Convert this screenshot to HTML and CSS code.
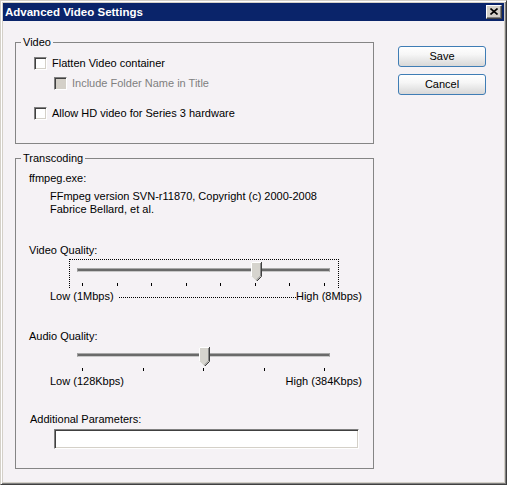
FILE: index.html
```html
<!DOCTYPE html>
<html>
<head>
<meta charset="utf-8">
<link rel="stylesheet" href="styles.css">
</head>
<body>
<div class="window">
  <div class="titlebar">
    <span class="title">Advanced Video Settings</span>
    <span class="close"><svg width="8" height="7" viewBox="0 0 8 7"><path d="M0.5 0.5 L7.5 6.5 M7.5 0.5 L0.5 6.5" stroke="#000" stroke-width="1.6" fill="none"/></svg></span>
  </div>
  <div class="client">
    <div class="main">
      <div class="group group-video">
        <div class="group-title">Video</div>
        <div class="check check-first"><span class="box"></span><span class="check-text">Flatten Video container</span></div>
        <div class="check check-sub disabled"><span class="box"></span><span class="check-text">Include Folder Name in Title</span></div>
        <div class="check check-third"><span class="box"></span><span class="check-text">Allow HD video for Series 3 hardware</span></div>
      </div>
      <div class="group group-trans">
        <div class="group-title">Transcoding</div>
        <div class="text exe">ffmpeg.exe:</div>
        <div class="text version">FFmpeg version SVN-r11870, Copyright (c) 2000-2008<br>Fabrice Bellard, et al.</div>
        <div class="text vq">Video Quality:</div>
        <div class="slider focused">
          <div class="track"></div>
          <div class="ticks"><i></i><i></i><i></i><i></i><i></i><i></i><i></i><i></i></div>
          <svg class="thumb" style="left:181px" width="11" height="19" viewBox="0 0 11 19">
            <polygon points="0,0 11,0 11,14 5.5,19.5 0,14" fill="#d6d4ce"/>
            <polyline points="0.5,14.5 0.5,0.5 10,0.5" stroke="#ffffff" fill="none"/>
            <polyline points="0.5,14.5 5,19" stroke="#f0f0f0" fill="none"/>
            <polyline points="10.5,0 10.5,14.5 5.5,19.5" stroke="#404040" fill="none"/>
            <polyline points="9.5,1 9.5,14 5.2,18.3" stroke="#8a8a8a" fill="none"/>
          </svg>
        </div>
        <div class="range"><span class="range-low">Low (1Mbps)</span><span class="dots"></span><span>High (8Mbps)</span></div>
        <div class="text aq">Audio Quality:</div>
        <div class="slider">
          <div class="track"></div>
          <div class="ticks"><i></i><i></i><i></i><i></i><i></i></div>
          <svg class="thumb" style="left:129px" width="11" height="19" viewBox="0 0 11 19">
            <polygon points="0,0 11,0 11,14 5.5,19.5 0,14" fill="#d6d4ce"/>
            <polyline points="0.5,14.5 0.5,0.5 10,0.5" stroke="#ffffff" fill="none"/>
            <polyline points="0.5,14.5 5,19" stroke="#f0f0f0" fill="none"/>
            <polyline points="10.5,0 10.5,14.5 5.5,19.5" stroke="#404040" fill="none"/>
            <polyline points="9.5,1 9.5,14 5.2,18.3" stroke="#8a8a8a" fill="none"/>
          </svg>
        </div>
        <div class="range"><span class="range-low">Low (128Kbps)</span><span class="spacer"></span><span>High (384Kbps)</span></div>
        <div class="text ap">Additional Parameters:</div>
        <div class="textbox"></div>
      </div>
    </div>
    <div class="buttons">
      <button class="btn">Save</button>
      <button class="btn">Cancel</button>
    </div>
  </div>
</div>
</body>
</html>
```
FILE: styles.css
```css
html, body {
  margin: 0;
  padding: 0;
}
body {
  font-family: "Liberation Sans", Arial, sans-serif;
  font-size: 11px;
  color: #000;
  background: #d4d0c8;
}
.window {
  width: 507px;
  height: 485px;
  box-sizing: border-box;
  border: 1px solid;
  border-color: #d4d0c8 #404040 #404040 #d4d0c8;
  box-shadow: inset 1px 1px 0 #ffffff, inset -1px -1px 0 #808080;
  padding: 2px;
  background: #d4d0c8;
  display: flex;
  flex-direction: column;
}
.titlebar {
  height: 18px;
  flex: none;
  background: #0a246a;
  display: flex;
  align-items: flex-start;
  justify-content: space-between;
}
.title {
  color: #fff;
  font-weight: bold;
  font-size: 11.5px;
  line-height: 18px;
  padding-left: 2px;
}
.close {
  width: 16px;
  height: 14px;
  box-sizing: border-box;
  margin: 2px 2px 0 0;
  background: #d4d0c8;
  border: 1px solid;
  border-color: #ffffff #404040 #404040 #ffffff;
  box-shadow: inset -1px -1px 0 #808080;
  display: flex;
  align-items: center;
  justify-content: center;
}
.close svg {
  display: block;
  margin: 0 1px 1px 0;
}
.client {
  flex: 1;
  background: #f5f2f5;
  display: flex;
  padding: 21px 0 0 12px;
}
.main {
  width: 359px;
  display: flex;
  flex-direction: column;
}
.group {
  box-sizing: border-box;
  border: 1px solid #858585;
  display: flex;
  flex-direction: column;
  align-items: flex-start;
}
.group-video {
  height: 102px;
}
.group-trans {
  height: 311px;
  margin-top: 14px;
}
.group-title {
  margin: -7px 0 0 5px;
  padding: 0 2px;
  line-height: 13px;
  height: 13px;
  background: #f5f2f5;
}
.check {
  display: flex;
  align-items: center;
  height: 13px;
  line-height: 13px;
  margin-left: 18px;
}
.check-first { margin-top: 8px; }
.check-sub { margin-top: 7px; margin-left: 38px; }
.check-third { margin-top: 17px; }
.box {
  width: 13px;
  height: 13px;
  box-sizing: border-box;
  border: 1px solid;
  border-color: #808080 #ffffff #ffffff #808080;
  box-shadow: inset 1px 1px 0 #404040, inset -1px -1px 0 #d4d0c8;
  background: #ffffff;
  flex: none;
}
.check-text {
  margin-left: 5px;
}
.disabled .box {
  background: #d4d0c8;
}
.disabled .check-text {
  color: #808080;
}
.text {
  line-height: 13px;
  margin-left: 13px;
}
.exe { margin-top: 7px; }
.version { margin-top: 5px; margin-left: 34px; }
.vq { margin-top: 28px; }
.aq { margin-top: 25px; }
.ap { margin-top: 23px; margin-left: 14px; }
.slider {
  position: relative;
  box-sizing: border-box;
  width: 270px;
  height: 29px;
  margin-left: 53px;
  border: 1px dotted transparent;
  border-bottom: 0;
}
.vq + .slider { margin-top: 2px; }
.aq + .slider { margin-top: 1px; }
.slider.focused {
  border-color: #000;
}
.track {
  margin: 8px 0 0 7px;
  width: 253px;
  height: 4px;
  box-sizing: border-box;
  background: #6a6a6a;
  border-top: 1px solid #a8a8a8;
  border-bottom: 1px solid #c8c8c8;
  border-left: 1px solid #9a9a9a;
  border-right: 1px solid #9a9a9a;
}
.ticks {
  margin: 11px 0 0 12px;
  width: 243px;
  height: 4px;
  display: flex;
  justify-content: space-between;
}
.ticks i {
  display: block;
  width: 1px;
  height: 3px;
  background: #000;
}
.thumb {
  position: absolute;
  top: 2px;
  display: block;
}
.range {
  display: flex;
  align-items: center;
  width: 312px;
  height: 17px;
  margin-left: 34px;
  line-height: 13px;
}
.range-low {
  margin-right: 5px;
}
.dots {
  flex: 1;
  height: 0;
  border-top: 1px dotted #000;
  margin-top: 2px;
}
.spacer {
  flex: 1;
}
.textbox {
  margin: 3px 0 0 38px;
  width: 305px;
  height: 20px;
  box-sizing: border-box;
  background: #fff;
  border: 1px solid;
  border-color: #808080 #ffffff #ffffff #808080;
  box-shadow: inset 1px 1px 0 #404040, inset -1px -1px 0 #d4d0c8;
}
.buttons {
  display: flex;
  flex-direction: column;
  margin-left: 24px;
  padding-top: 4px;
  gap: 7px;
}
.btn {
  width: 88px;
  height: 21px;
  box-sizing: border-box;
  margin: 0;
  padding: 0;
  border: 1px solid #3f7db5;
  border-radius: 3px;
  background: linear-gradient(#ffffff 0%, #f6f6f6 40%, #e4e4e4 75%, #d8d8d8 100%);
  font-family: "Liberation Sans", Arial, sans-serif;
  font-size: 11px;
  color: #000;
  line-height: 13px;
}
```
